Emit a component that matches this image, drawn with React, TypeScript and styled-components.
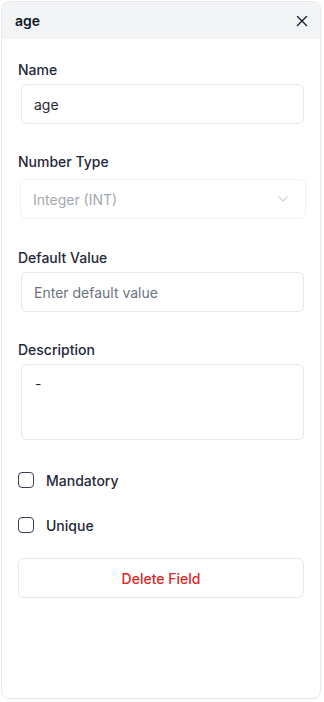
import styled, { createGlobalStyle } from "styled-components";

// GLOBAL
const GlobalStyle = createGlobalStyle`
  * {
    box-sizing: border-box;
  }
  body {
    margin: 0;
    background: #ffffff;
    font-family: Inter, "Noto Sans", sans-serif;
    color: #1f2937;
  }
`;

function CloseIcon() {
  return (
    <svg width="12" height="12" viewBox="0 0 12 12" fill="none">
      <path
        d="M1.5 1.5L10.5 10.5M10.5 1.5L1.5 10.5"
        stroke="#111827"
        strokeWidth="1.3"
        strokeLinecap="round"
      />
    </svg>
  );
}

function ChevronIcon() {
  return (
    <svg width="10" height="6" viewBox="0 0 10 6" fill="none">
      <path
        d="M1 1L5 5L9 1"
        stroke="#d1d5db"
        strokeWidth="1.2"
        strokeLinecap="round"
        strokeLinejoin="round"
      />
    </svg>
  );
}

function App() {
  return (
    <>
      <GlobalStyle />
      <Panel>
        <Header>
          <HeaderTitle>age</HeaderTitle>
          <CloseButton aria-label="Close">
            <CloseIcon />
          </CloseButton>
        </Header>
        <Body>
          <Field>
            <Label>Name</Label>
            <InputWrap>
              <Input defaultValue="age" />
            </InputWrap>
          </Field>

          <Field $gap={29}>
            <Label>Number Type</Label>
            <SelectBox>
              <SelectText>Integer (INT)</SelectText>
              <ChevronIcon />
            </SelectBox>
          </Field>

          <Field>
            <Label>Default Value</Label>
            <InputWrap>
              <Input placeholder="Enter default value" />
            </InputWrap>
          </Field>

          <Field>
            <Label>Description</Label>
            <InputWrap>
              <TextArea defaultValue="-" />
            </InputWrap>
          </Field>

          <CheckRow>
            <CheckBox type="checkbox" />
            <CheckLabel>Mandatory</CheckLabel>
          </CheckRow>
          <CheckRow>
            <CheckBox type="checkbox" />
            <CheckLabel>Unique</CheckLabel>
          </CheckRow>

          <DeleteButton>Delete Field</DeleteButton>
        </Body>
      </Panel>
    </>
  );
}

// STYLED COMPONENTS
const Panel = styled.div`
  margin: 1px 0 0 1px;
  width: 320px;
  height: 698px;
  border: 1px solid #e5e7eb;
  border-radius: 8px;
  background: #ffffff;
  overflow: hidden;
  display: flex;
  flex-direction: column;
`;

const Header = styled.div`
  height: 37px;
  background: #f3f4f6;
  display: flex;
  align-items: center;
  justify-content: space-between;
  padding: 0 10px 0 13px;
`;

const HeaderTitle = styled.span`
  font-size: 14px;
  font-weight: 600;
  color: #111827;
`;

const CloseButton = styled.button`
  border: none;
  background: transparent;
  padding: 0;
  width: 16px;
  height: 16px;
  display: flex;
  align-items: center;
  justify-content: center;
  cursor: pointer;
`;

const Body = styled.div`
  padding: 21px 16px 0 16px;
  display: flex;
  flex-direction: column;
`;

const Field = styled.div<{ $gap?: number }>`
  display: flex;
  flex-direction: column;
  margin-bottom: ${(props) => props.$gap ?? 28}px;
`;

const Label = styled.label`
  font-size: 14px;
  font-weight: 500;
  line-height: 20px;
  color: #1f2937;
  margin-bottom: 4px;
`;

const InputWrap = styled.div`
  padding: 0 0 0 3px;
`;

const Input = styled.input`
  width: 100%;
  height: 40px;
  border: 1px solid #e5e7eb;
  border-radius: 6px;
  padding: 0 12px;
  font-family: Inter, "Noto Sans", sans-serif;
  font-size: 14px;
  color: #1f2937;
  background: #ffffff;
  outline: none;
  &::placeholder {
    color: #6b7280;
  }
`;

const SelectBox = styled.div`
  margin: 3px -2px 0 2px;
  height: 40px;
  border: 1px solid #f0f1f3;
  border-radius: 6px;
  display: flex;
  align-items: center;
  justify-content: space-between;
  padding: 0 17px 0 12px;
`;

const SelectText = styled.span`
  font-size: 14px;
  color: #a3a8b0;
`;

const TextArea = styled.textarea`
  width: 100%;
  height: 76px;
  border: 1px solid #e5e7eb;
  border-radius: 6px;
  padding: 9px 13px;
  font-family: Inter, "Noto Sans", sans-serif;
  font-size: 14px;
  line-height: 20px;
  color: #1f2937;
  resize: none;
  outline: none;
  display: block;
`;

const CheckRow = styled.label`
  display: flex;
  align-items: center;
  gap: 12px;
  height: 20px;
  margin: 2px 0 23px 0;
`;

const CheckBox = styled.input`
  appearance: none;
  margin: 0;
  width: 16px;
  height: 16px;
  border: 1.5px solid #374151;
  border-radius: 4px;
  background: #ffffff;
`;

const CheckLabel = styled.span`
  font-size: 14px;
  font-weight: 500;
  color: #1f2937;
`;

const DeleteButton = styled.button`
  margin: 0;
  height: 40px;
  border: 1px solid #e5e7eb;
  border-radius: 6px;
  background: #ffffff;
  font-family: Inter, "Noto Sans", sans-serif;
  font-size: 14px;
  font-weight: 500;
  color: #dc2626;
  cursor: pointer;
`;

export default App;
